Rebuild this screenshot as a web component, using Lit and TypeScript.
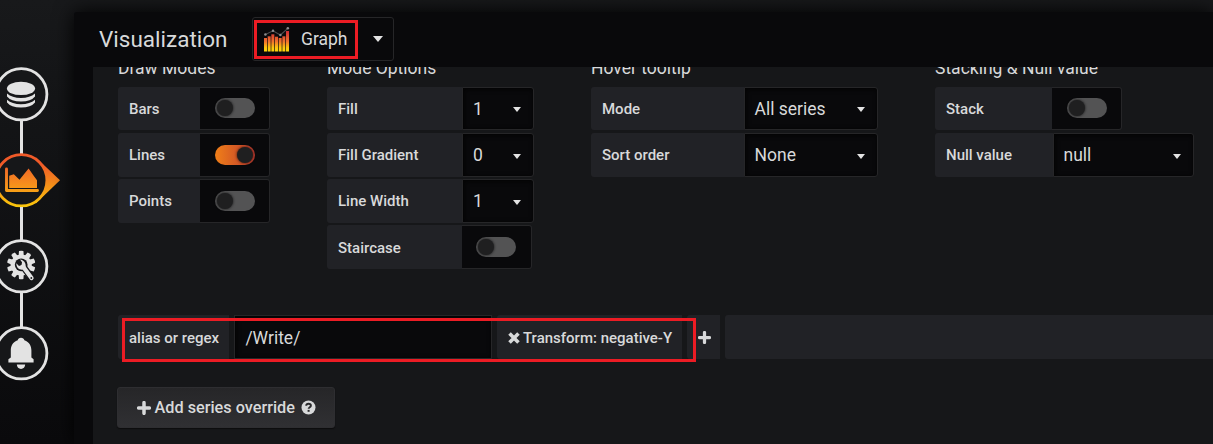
import { LitElement, html, css, svg, nothing } from "lit";
import { customElement, property } from "lit/decorators.js";

const LIGHT = "#e3e3e3";

/** On/off slider shown at the end of a form row. */
@customElement("ui-switch")
class UiSwitch extends LitElement {
  @property({ type: Boolean }) on = false;
  static styles = css`
    :host { display: flex; box-sizing: border-box; width: 70px; justify-content: center; align-items: center;
      background: #09090b; border: 1px solid #262628; border-left: 0; border-radius: 0 3px 3px 0; padding-bottom: 0.5px; }
    .track { display: flex; box-sizing: border-box; width: 40px; height: 20px; padding: 2px 2px; border-radius: 10px; background: #535354; margin-left: 0.5px; }
    .on { justify-content: flex-end; background: linear-gradient(90deg, #f07f18, #bd3a30); }
    .knob { width: 16px; height: 16px; border-radius: 50%; background: #1f1f20; box-shadow: 0 0 3px rgba(0, 0, 0, 0.8); }
  `;
  render() {
    return html`<div class="track ${this.on ? "on" : ""}"><div class="knob"></div></div>`;
  }
}

/** Dropdown field. */
@customElement("ui-select")
class UiSelect extends LitElement {
  @property() value = "";
  static styles = css`
    :host { display: flex; box-sizing: border-box; justify-content: space-between; align-items: center; padding: 0 12px 0 9.5px;
      background: #09090b; border: 1px solid #262628; border-radius: 0 3px 3px 0; font-size: 17.5px; color: #d8d9da;
      box-shadow: inset 1px 1px 5px #030303; }
    .caret { width: 0; height: 0; margin-top: 2px; border: 4.5px solid transparent; border-top: 5px solid #e3e3e3; border-bottom: 0; }
  `;
  render() {
    return html`<span>${this.value}</span><span class="caret"></span>`;
  }
}

type Row = { label: string; labelWidth: number; value?: string; width?: number; on?: boolean };
type Group = { title: string; width: number; rows: Row[] };

const GROUPS: Group[] = [
  { title: "Draw Modes", width: 209, rows: [
    { label: "Bars", labelWidth: 82 },
    { label: "Lines", labelWidth: 82, on: true },
    { label: "Points", labelWidth: 82 },
  ] },
  { title: "Mode Options", width: 264, rows: [
    { label: "Fill", labelWidth: 135.4, value: "1", width: 71.6 },
    { label: "Fill Gradient", labelWidth: 135.4, value: "0", width: 71.6 },
    { label: "Line Width", labelWidth: 135.4, value: "1", width: 71.6 },
    { label: "Staircase", labelWidth: 134.5 },
  ] },
  { title: "Hover tooltip", width: 344, rows: [
    { label: "Mode", labelWidth: 153, value: "All series", width: 134 },
    { label: "Sort order", labelWidth: 153, value: "None", width: 134 },
  ] },
  { title: "Stacking & Null value", width: 270, rows: [
    { label: "Stack", labelWidth: 117 },
    { label: "Null value", labelWidth: 118, value: "null", width: 141 },
  ] },
];

const teeth = Array.from({ length: 10 }, (_, i) => i * 36);

const ring = svg`<circle cx="27.3" cy="27.3" r="25.6" fill="#161719" stroke=${LIGHT} stroke-width="2.8"/>`;

const databaseIcon = svg`${ring}
  <g fill=${LIGHT}>
    <ellipse cx="27" cy="21.4" rx="14.1" ry="6.7"/>
    <path d="M13 26.6Q18 31 27 31T41 26.6V29.4Q37 34.4 27 34.4T13 29.4Z"/>
    <path d="M13 32.8Q18 37.2 27 37.2T41 32.8V35.6Q37 40.6 27 40.6T13 35.6Z"/>
  </g>`;

const chartIcon = svg`
  <defs><linearGradient id="hot" gradientUnits="userSpaceOnUse" x1="0" y1="0" x2="0" y2="55">
    <stop offset="0" stop-color="#f05a28"/><stop offset="0.2" stop-color="#f05a28"/><stop offset="1" stop-color="#fbca0a"/>
  </linearGradient>
  <linearGradient id="hotIcon" gradientUnits="userSpaceOnUse" x1="0" y1="12" x2="0" y2="48">
    <stop offset="0" stop-color="#f0622a"/><stop offset="1" stop-color="#fbb610"/>
  </linearGradient></defs>
  <path d="M42 4.4L66 27.3L42 50.2Z" fill="url(#hot)"/>
  <circle cx="27.3" cy="27.3" r="25.6" fill="#161719" stroke="url(#hot)" stroke-width="2.8"/>
  <path d="M12.5 16V37.5H43.5" fill="none" stroke="url(#hotIcon)" stroke-width="2.9" stroke-linecap="round" stroke-linejoin="round"/>
  <path d="M15.2 34.9V22.8L19.8 21.3L25.5 26.8L34.6 15.6L40.2 23.6L43 27.2V34.9Z" fill="url(#hotIcon)"/>`;

const gearIcon = svg`${ring}
  <g fill=${LIGHT}>
    <circle cx="27.2" cy="26" r="10.6"/>
    ${teeth.map((a) => svg`<path d="M24.6 17L25 12.1Q27.2 11.5 29.4 12.1L29.8 17Z" transform="rotate(${a} 27.2 26)"/>`)}
  </g>
  <circle cx="27.2" cy="25.8" r="6.4" fill="#161719"/>
  <path d="M29.5 28L37.6 39" stroke="#161719" stroke-width="6.8" stroke-linecap="round"/>
  <path d="M29 27.5L37.5 39" stroke=${LIGHT} stroke-width="4.3" stroke-linecap="round"/>
  <path d="M26 20.4C29.6 20.8 32.2 23.8 31.6 27.8L29 30.6C25.2 31.2 22.2 28.4 22.3 24.2L25 27L27.6 26L28 23.2Z" fill=${LIGHT}/>
  <circle cx="37.3" cy="39" r="0.9" fill="#161719"/>`;

const bellIcon = svg`${ring}
  <g fill=${LIGHT}>
    <path d="M27 11.8C28.8 11.8 30.1 12.8 30.4 14.2C35.3 15.8 37.4 20 37.4 24.5V31.5L39.6 33.2V36.6H14.4V33.2L16.8 31.5V24.5C16.8 20 18.8 15.8 23.7 14.2C24 12.8 25.2 11.8 27 11.8Z"/>
    <path d="M22.8 38.6H31.2C31 41.4 29.4 43 27 43S23 41.4 22.8 38.6Z"/>
  </g>`;

const BARS = [11, 9.3, 7.3, 9.7, 11, 9.3, 4];

@customElement("app-root")
class AppRoot extends LitElement {
  static styles = css`
    :host { display: block; font-family: Roboto, sans-serif; color: #d8d9da; }
    * { box-sizing: border-box; }
    .page { position: relative; display: flex; width: 1213px; height: 444px; overflow: hidden;
      background: linear-gradient(180deg, #18191b 0, #141517 100px, #0a0a0c 444px); }
    .rail { width: 74px; padding-top: 67px; flex: none; display: flex; flex-direction: column; align-items: flex-start; }
    .node { display: block; width: 67px; height: 55px; margin-left: -6px; flex: none; }
    .wire { width: 3px; height: 33px; margin: -1px 0 -1px 20px; background: #e3e3e3; flex: none; }
    .wire:nth-last-of-type(1) { height: 34px; }
    .panel { flex: 1; min-width: 0; margin-top: 12px; display: flex; flex-direction: column; background: #09090b;
      border-radius: 3px 0 0 0; box-shadow: 0 0 20px #000; }
    .head { display: flex; height: 55px; padding: 5px 0 0 25px; flex: none; }
    .title { width: 153px; font-size: 22.5px; line-height: 45px; white-space: nowrap; }
    .picker { display: flex; align-items: center; width: 142px; height: 44px; padding: 0 10px 0 11px; border: 1px solid #262628; border-radius: 3px; font-size: 17.5px; }
    .picker svg { width: 26px; height: 26px; flex: none; margin-top: 2px; }
    .name { flex: 1; padding-left: 11px; }
    .caret { border: 5.5px solid transparent; border-top: 6px solid #e3e3e3; border-bottom: 0; }
    .body { flex: 1; margin-left: 19px; padding-left: 25px; background: #161719; overflow: hidden; }
    .groups { display: flex; height: 248px; }
    .group { flex: none; }
    h5 { margin: -9px 0 8px; height: 21px; line-height: 21px; font-size: 17.5px; font-weight: 400; white-space: nowrap; }
    .row { display: flex; height: 44px; margin-bottom: 2px; }
    .row:first-of-type { height: 43px; margin-bottom: 3px; }
    .label { display: flex; align-items: center; padding: 0 0 0 11px; background: #212226; font-size: 15px; font-weight: 500;
      white-space: nowrap; border-radius: 3px 0 0 3px; flex: none; }
    .row:first-of-type .label, .row:last-child:nth-child(5) .label { padding-top: 1px; }
    .override { display: flex; gap: 5px; height: 44px; }
    .override .label { padding-top: 1px; }
    .alias { width: 111px; }
    .input { width: 258px; padding: 0 10.4px; border: 1px solid #262628; background: #09090b; font-size: 17.5px; line-height: 44px;
      box-shadow: inset 1px 1px 5px #030303; }
    .transform { width: 185px; gap: 3px; }
    .plus { width: 33px; }
    .filler { flex: 1; background: #212226; border-radius: 3px 0 0 3px; }
    .add { display: flex; align-items: center; width: 218px; height: 41px; margin: 28px 0 0 -1px; padding: 0 0 0 19px; border-radius: 3px;
      background: linear-gradient(180deg, #262628, #303033); border: 1px solid #2e2e31; font-size: 16.25px; font-weight: 500; white-space: nowrap; box-shadow: 0 1px 1px #0d0d0e; }
    .add span { margin: 0 6px 0 3.5px; }
    .mark { position: absolute; border: 3px solid #ec1c24; }
    .mark-picker { left: 254px; top: 20px; width: 104px; height: 39px; }
    .mark-override { left: 122px; top: 318px; width: 574px; height: 44px; }
  `;

  private row(r: Row) {
    return html`<div class="row">
      <div class="label" style="width:${r.labelWidth}px">${r.label}</div>
      ${r.value === undefined
        ? html`<ui-switch ?on=${!!r.on}></ui-switch>`
        : html`<ui-select .value=${r.value} style="width:${r.width}px"></ui-select>`}
    </div>`;
  }

  private plus(size: number) {
    return html`<svg width=${size} height=${size} viewBox="0 0 12 12"><path d="M6 1.4V10.6M1.4 6H10.6" stroke="#d8d9da" stroke-width="3" stroke-linecap="round"/></svg>`;
  }

  render() {
    const icons = [databaseIcon, chartIcon, gearIcon, bellIcon];
    return html`<div class="page">
      <div class="rail">
        ${icons.map((icon, i) => html`${i ? html`<div class="wire"></div>` : nothing}<svg class="node" viewBox="0 0 67 55">${icon}</svg>`)}
      </div>
      <div class="panel">
        <div class="head">
          <div class="title">Visualization</div>
          <div class="picker">
            <svg viewBox="0 0 26 26">
              <defs><linearGradient id="bars" gradientUnits="userSpaceOnUse" x1="0" y1="4" x2="0" y2="25">
                <stop offset="0" stop-color="#cf2a35"/><stop offset="0.5" stop-color="#f0722c"/><stop offset="0.8" stop-color="#fbc70e"/><stop offset="1" stop-color="#fcd80a"/>
              </linearGradient></defs>
              ${BARS.map((y, i) => svg`<rect x=${i * 3.67} y=${y} width="3" height=${24.5 - y} fill="url(#bars)"/>`)}
              <path d="M1.4 7.4L9 3.8L16.4 8L23.8 1.3" fill="none" stroke="#4c4c4e" stroke-width="1.1"/>
              ${[[1.4, 7.4], [9, 3.8], [16.4, 8], [23.8, 1.3]].map(([x, y]) => svg`<circle cx=${x} cy=${y} r="1.25" fill="#8b8b8d"/>`)}
            </svg>
            <span class="name">Graph</span><span class="caret"></span>
          </div>
        </div>
        <div class="body">
          <div class="groups">
            ${GROUPS.map((g) => html`<div class="group" style="width:${g.width}px"><h5>${g.title}</h5>${g.rows.map((r) => this.row(r))}</div>`)}
          </div>
          <div class="override">
            <div class="label alias">alias or regex</div>
            <div class="input">/Write/</div>
            <div class="label transform">
              <svg width="12" height="12" viewBox="0 0 12 12"><path d="M2.8 2.8L9.2 9.2M9.2 2.8L2.8 9.2" stroke="#d8d9da" stroke-width="3.6" stroke-linecap="square"/></svg>
              <span>Transform: negative-Y</span>
            </div>
            <div class="label plus">${this.plus(13)}</div>
            <div class="filler"></div>
          </div>
          <div class="add">${this.plus(14)}<span>Add series override</span>
            <svg width="15" height="15" viewBox="0 0 15 15"><circle cx="7.5" cy="7.5" r="7" fill="#d8d9da"/><path d="M5.2 5.8C5.3 4.4 6.2 3.8 7.5 3.8C9 3.8 9.9 4.6 9.9 5.7C9.9 7.2 7.6 7.2 7.6 8.8" fill="none" stroke="#29292b" stroke-width="1.9"/><rect x="6.6" y="9.9" width="2" height="1.9" fill="#29292b"/></svg>
          </div>
        </div>
      </div>
      <div class="mark mark-picker"></div>
      <div class="mark mark-override"></div>
    </div>`;
  }
}
